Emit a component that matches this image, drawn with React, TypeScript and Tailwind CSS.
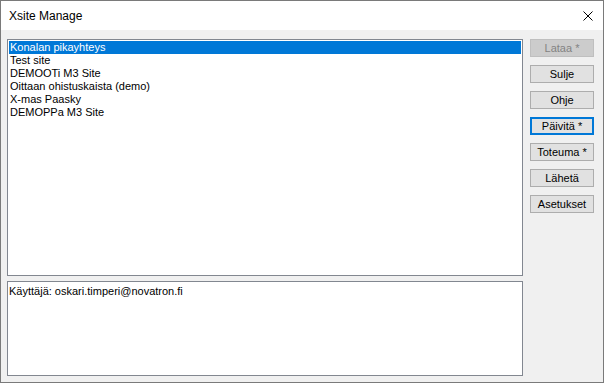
const sites = [
  'Konalan pikayhteys',
  'Test site',
  'DEMOOTi M3 Site',
  'Oittaan ohistuskaista (demo)',
  'X-mas Paasky',
  'DEMOPPa M3 Site',
]

const buttons = [
  { label: 'Lataa *', disabled: true },
  { label: 'Sulje' },
  { label: 'Ohje' },
  { label: 'Päivitä *', focused: true },
  { label: 'Toteuma *' },
  { label: 'Lähetä' },
  { label: 'Asetukset' },
]

function App() {
  return (
    <div className="w-[604px] h-[383px] border border-[#7a7a7a] flex flex-col bg-[#f0f0f0] text-[11px] text-black font-['Liberation_Sans',Arial,sans-serif]">
      {/* title bar */}
      <div className="h-[29px] bg-white flex items-center justify-between">
        <span className="pl-[8px] text-[12px]">Xsite Manage</span>
        <svg width="10" height="10" viewBox="0 0 10 10" className="mr-[10px]">
          <path d="M0.5 0.5 L9.5 9.5 M9.5 0.5 L0.5 9.5" stroke="#000" strokeWidth="1" />
        </svg>
      </div>

      <div className="flex-1 flex pt-[9px] pl-[6px] pr-[9px] pb-[6px] gap-[7px]">
        <div className="w-[516px] flex flex-col gap-[5px]">
          <div className="h-[237px] bg-white border border-[#828790] p-px">
            {sites.map((s, i) => (
              <div
                key={s}
                className={i === 0
                  ? 'h-[13px] leading-[13px] pl-[1px] bg-[#0078d7] text-white'
                  : 'h-[13px] leading-[13px] pl-[1px]'}
              >{s}</div>
            ))}
          </div>
          <div className="flex-1 bg-white border border-[#828790] pl-[1px] pt-[3px] leading-[13px]">
            Käyttäjä: oskari.timperi@novatron.fi
          </div>
        </div>

        <div className="w-[64px] flex flex-col gap-[8px]">
          {buttons.map(b => (
            <div
              key={b.label}
              className={
                b.disabled
                  ? 'h-[18px] flex items-center justify-center bg-[#cccccc] border border-[#bfbfbf] text-[#838383]'
                  : b.focused
                    ? 'h-[18px] flex items-center justify-center bg-[#e1e1e1] border-2 border-[#0078d7]'
                    : 'h-[18px] flex items-center justify-center bg-[#e1e1e1] border border-[#adadad]'
              }
            >{b.label}</div>
          ))}
        </div>
      </div>
    </div>
  )
}

export default App
